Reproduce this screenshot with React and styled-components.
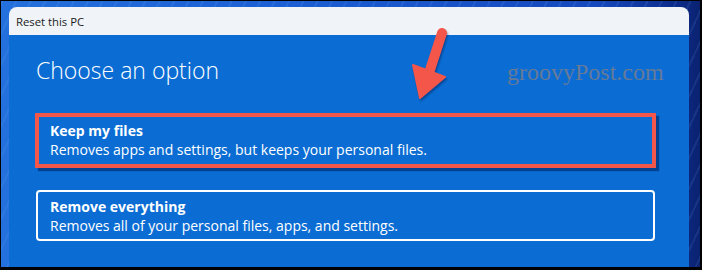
import React from "react";
import styled, { createGlobalStyle } from "styled-components";

const GlobalStyle = createGlobalStyle`
  html, body {
    margin: 0;
    padding: 0;
    background: #000;
  }
  * {
    box-sizing: border-box;
  }
`;

const options = [
  {
    title: "Keep my files",
    text: "Removes apps and settings, but keeps your personal files.",
    marked: true,
  },
  {
    title: "Remove everything",
    text: "Removes all of your personal files, apps, and settings.",
  },
];

export default function App() {
  return (
    <>
      <GlobalStyle />
      <Desktop>
        <Window>
          <TitleBar>Reset this PC</TitleBar>
          <Content>
            <Heading>Choose an option</Heading>
            <OptionList>
              {options.map((o) => (
                <Option key={o.title} $marked={o.marked}>
                  <OptionTitle>{o.title}</OptionTitle>
                  <OptionText>{o.text}</OptionText>
                </Option>
              ))}
            </OptionList>
          </Content>
          <Watermark>groovyPost.com</Watermark>
          <Arrow width="60" height="90" viewBox="0 0 60 90">
            <line
              x1="42"
              y1="13"
              x2="30"
              y2="50"
              stroke="#f4564a"
              strokeWidth="10"
              strokeLinecap="round"
            />
            <polygon
              points="13,45 45,57 20,78"
              fill="#f4564a"
              stroke="#f4564a"
              strokeWidth="2"
              strokeLinejoin="round"
            />
          </Arrow>
        </Window>
      </Desktop>
    </>
  );
}

const Desktop = styled.div`
  width: 702px;
  height: 270px;
  display: flex;
  padding: 6px 11px 0 8px;
  border-style: solid;
  border-color: #000;
  border-width: 1px 2px 3px 1px;
  background:
    repeating-linear-gradient(
      115deg,
      rgba(130, 200, 255, 0.1) 0 2px,
      rgba(0, 0, 0, 0) 2px 13px
    ),
    linear-gradient(90deg, #2470dc 0%, #1d5fd4 40%, #1648bd 85%, #0c2a88 97%, #0a2270 100%);
  overflow: hidden;
`;

const Window = styled.div`
  position: relative;
  flex: 1;
  display: flex;
  flex-direction: column;
  border-radius: 8px 8px 0 0;
  overflow: hidden;
`;

const TitleBar = styled.div`
  height: 28px;
  flex-shrink: 0;
  display: flex;
  align-items: center;
  padding: 1px 0 0 7px;
  background: #f0f3f8;
  color: #1b1b1b;
  font-family: "Open Sans", "Noto Sans", sans-serif;
  font-size: 11.3px;
`;

const Content = styled.div`
  flex: 1;
  padding: 20px 34px 0 27px;
  background: #0b6dd3;
  color: #fff;
  font-family: "Open Sans", "Noto Sans", sans-serif;
`;

const Heading = styled.h1`
  margin: 0;
  font-size: 23px;
  font-weight: 300;
  line-height: 31px;
`;

const OptionList = styled.div`
  display: flex;
  flex-direction: column;
  gap: 22px;
  margin-top: 27px;
`;

const Option = styled.div`
  display: flex;
  flex-direction: column;
  border: 2px solid #fff;
  border-radius: 4px;
  padding: 5px 12px 4px;

  ${({ $marked }) =>
    $marked &&
    `
    margin: 0 -1px;
    border: 4px solid #f4564a;
    border-radius: 0;
    padding: 4px 11px 5px;
    box-shadow: 3px 3px 1px rgba(0, 30, 90, 0.55);
  `}
`;

const OptionTitle = styled.div`
  font-size: 14px;
  font-weight: 700;
  line-height: 19px;
`;

const OptionText = styled.div`
  font-size: 14px;
  line-height: 19px;
`;

const Watermark = styled.div`
  position: absolute;
  left: 498px;
  top: 53px;
  font-family: "Liberation Serif", serif;
  font-size: 24px;
  line-height: 24px;
  color: #667a98;
  pointer-events: none;
`;

const Arrow = styled.svg`
  position: absolute;
  left: 391px;
  top: 13px;
  filter: drop-shadow(1px 2px 1px rgba(0, 20, 70, 0.45));
`;
